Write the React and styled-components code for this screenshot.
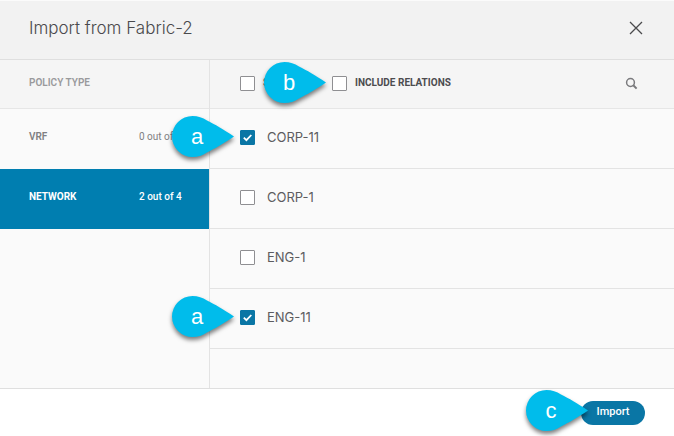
import React, { useState } from "react";
import styled, { createGlobalStyle, css } from "styled-components";

const GlobalStyle = createGlobalStyle`
  * { box-sizing: border-box; }
  body {
    margin: 0;
    background: #fff;
    color: #58585b;
    font-family: Inter, "Liberation Sans", sans-serif;
  }
  button { font: inherit; border: 0; padding: 0; background: none; cursor: pointer; }
`;

const smallFont = css`
  font-family: Roboto, "Liberation Sans", sans-serif;
  font-size: 10px;
  line-height: 12px;
`;

const Dialog = styled.section`
  display: flex;
  flex-direction: column;
  min-height: 100vh;
`;

const Header = styled.header`
  display: flex;
  align-items: center;
  justify-content: space-between;
  height: 60px;
  padding: 0 30px 4px 29px;
  background: #f2f2f2;
  border-top: 1px solid #fbfbfb;
  border-bottom: 1px solid #dfdfdf;
`;

const Title = styled.h1`
  margin: 0;
  font-size: 17px;
  line-height: 24px;
  font-weight: 300;
  color: #4a4a4c;
`;

const IconButton = styled.button`
  display: flex;
  color: ${(p) => p.$color};
`;

const Body = styled.div`
  flex: 1;
  display: grid;
  grid-template-columns: 210px 1fr;
  background: #fafafa;
  border-bottom: 1px solid #dfdfdf;
`;

const Sidebar = styled.nav`
  border-right: 1px solid #e3e3e3;
`;

const barStyles = css`
  ${smallFont}
  display: flex;
  align-items: center;
  height: 49px;
  background: #f5f5f5;
  border-bottom: 1px solid #e6e6e6;
`;

const SidebarHeading = styled.h2`
  ${barStyles}
  margin: 0;
  padding: 0 29px 2px;
  font-weight: 600;
  color: #9a9a9c;
`;

const PolicyButton = styled.button`
  display: grid;
  grid-template-columns: 110px 1fr;
  align-items: center;
  width: 100%;
  height: 60px;
  padding: 0 0 4px 29px;
  text-align: left;
  && {
    ${smallFont}
  }
  color: ${(p) => (p.$active ? "#fff" : "#7f7f82")};
  background: ${(p) => (p.$active ? "#007eb0" : "transparent")};
`;

const PolicyName = styled.span`
  font-weight: ${(p) => (p.$active ? 700 : 600)};
`;

const PolicyCount = styled.span`
  font-weight: ${(p) => (p.$active ? 500 : 400)};
`;

const Content = styled.div`
  min-width: 0;
`;

const Toolbar = styled.div`
  ${barStyles}
  padding: 0 36px 1px 30px;
`;

const ToolbarOption = styled.div`
  width: ${(p) => p.$width};
`;

const ToolbarEnd = styled.div`
  margin-left: auto;
`;

const List = styled.ul`
  margin: 0;
  padding: 0;
  list-style: none;
`;

const ListRow = styled.li`
  display: flex;
  align-items: center;
  height: 60px;
  padding: 0 30px 2px;
  border-bottom: 1px solid #e3e3e3;
`;

const OptionLabel = styled.label`
  display: flex;
  align-items: center;
  gap: ${(p) => (p.$heading ? "8px" : "12px")};
  font-size: ${(p) => (p.$heading ? "10px" : "13px")};
  line-height: ${(p) => (p.$heading ? "12px" : "16px")};
  font-weight: ${(p) => (p.$heading ? 700 : 400)};
  color: ${(p) => (p.$heading ? "#4c4c4f" : "#5c5c5f")};
  white-space: nowrap;
  cursor: pointer;
`;

const LabelText = styled.span`
  padding-bottom: 2px;
`;

const BoxHolder = styled.span`
  position: relative;
  display: flex;
`;

const Box = styled.input`
  appearance: none;
  width: 15px;
  height: 15px;
  margin: 0;
  border: 1px solid #8f8f92;
  border-radius: 1px;
  background: #fff;
  &:checked {
    background: #0a76a5;
    border-color: #0a76a5;
  }
`;

const Tick = styled.svg`
  position: absolute;
  inset: 0;
  pointer-events: none;
`;

const MarkerRoot = styled.span`
  position: absolute;
  z-index: 1;
  top: 50%;
  right: ${(p) => p.$right};
  width: 62px;
  height: 41px;
  margin-top: -22px;
  pointer-events: none;
`;

const MarkerShape = styled.svg`
  position: absolute;
  inset: 0;
  overflow: visible;
  filter: drop-shadow(0 3px 2px rgba(0, 0, 0, 0.5));
`;

const MarkerLetter = styled.span`
  position: relative;
  display: block;
  padding-left: 2px;
  width: 48px;
  text-align: center;
  font-family: "Liberation Sans", Arial, sans-serif;
  font-size: 22px;
  line-height: 41px;
  font-weight: 400;
  color: #fff;
`;

const Footer = styled.footer`
  display: flex;
  align-items: center;
  justify-content: flex-end;
  height: 47px;
  padding: 0 29px 1px 0;
  background: #fff;
`;

const FooterAction = styled.div`
  position: relative;
`;

const ImportButton = styled.button`
  width: 64px;
  height: 24px;
  border-radius: 12px;
  background: #0a76a5;
  color: #fff;
  && {
    padding-bottom: 2px;
    font-family: Roboto, "Liberation Sans", sans-serif;
    font-size: 11px;
    line-height: 16px;
    font-weight: 500;
  }
`;

function Marker({ letter, right }) {
  return (
    <MarkerRoot $right={right}>
      <MarkerShape width="62" height="41" viewBox="0 0 62 41" aria-hidden="true">
        <path
          fill="#00bceb"
          d="M62 20.5C51 13 43 8.5 35 4.5C30.500 1.500 26 0 20.500 0A20.500 20.500 0 0 0 20.500 41C26 41 30.500 39.500 35 36.500C43 32.500 51 28 62 20.500Z"
        />
      </MarkerShape>
      <MarkerLetter>{letter}</MarkerLetter>
    </MarkerRoot>
  );
}

function Option({ label, heading, defaultChecked = false, marker }) {
  const [checked, setChecked] = useState(defaultChecked);
  return (
    <OptionLabel $heading={heading}>
      <BoxHolder>
        <Box
          type="checkbox"
          aria-label={label}
          checked={checked}
          onChange={(e) => setChecked(e.target.checked)}
        />
        {checked && (
          <Tick width="15" height="15" viewBox="0 0 15 15" aria-hidden="true">
            <path d="M3.800 7.700L6.400 10.200L11.300 5" fill="none" stroke="#fff" strokeWidth="1.800" />
          </Tick>
        )}
        {marker && <Marker letter={marker} right="21px" />}
      </BoxHolder>
      <LabelText>{label}</LabelText>
    </OptionLabel>
  );
}

const policies = [
  { name: "VRF", count: "0 out of 4" },
  { name: "NETWORK", count: "2 out of 4" },
];

const networks = [
  { name: "CORP-11", checked: true, marker: "a" },
  { name: "CORP-1" },
  { name: "ENG-1" },
  { name: "ENG-11", checked: true, marker: "a" },
];

export default function App() {
  const [active, setActive] = useState("NETWORK");
  return (
    <>
      <GlobalStyle />
      <Dialog>
        <Header>
          <Title>Import from Fabric-2</Title>
          <IconButton $color="#4a4a4c" aria-label="Close">
            <svg width="16" height="16" viewBox="0 0 16 16" aria-hidden="true">
              <path d="M2 2L14 14M14 2L2 14" stroke="currentColor" strokeWidth="1.300" />
            </svg>
          </IconButton>
        </Header>
        <Body>
          <Sidebar>
            <SidebarHeading>POLICY TYPE</SidebarHeading>
            {policies.map(({ name, count }) => (
              <PolicyButton key={name} $active={name === active} onClick={() => setActive(name)}>
                <PolicyName $active={name === active}>{name}</PolicyName>
                <PolicyCount $active={name === active}>{count}</PolicyCount>
              </PolicyButton>
            ))}
          </Sidebar>
          <Content>
            <Toolbar>
              <ToolbarOption $width="92px">
                <Option heading label="SELECT ALL" />
              </ToolbarOption>
              <ToolbarOption $width="auto">
                <Option heading label="INCLUDE RELATIONS" marker="b" />
              </ToolbarOption>
              <ToolbarEnd>
                <IconButton $color="#7a7a7d" aria-label="Search">
                  <svg width="13" height="13" viewBox="0 0 13 13" aria-hidden="true">
                    <circle cx="5.500" cy="5.500" r="3.900" fill="none" stroke="currentColor" strokeWidth="1.500" />
                    <path d="M8.300 8.300L11.600 11.600" stroke="currentColor" strokeWidth="2" />
                  </svg>
                </IconButton>
              </ToolbarEnd>
            </Toolbar>
            <List>
              {networks.map(({ name, checked, marker }) => (
                <ListRow key={name}>
                  <Option label={name} defaultChecked={checked} marker={marker} />
                </ListRow>
              ))}
            </List>
          </Content>
        </Body>
        <Footer>
          <FooterAction>
            <ImportButton>Import</ImportButton>
            <Marker letter="c" right="57px" />
          </FooterAction>
        </Footer>
      </Dialog>
    </>
  );
}
